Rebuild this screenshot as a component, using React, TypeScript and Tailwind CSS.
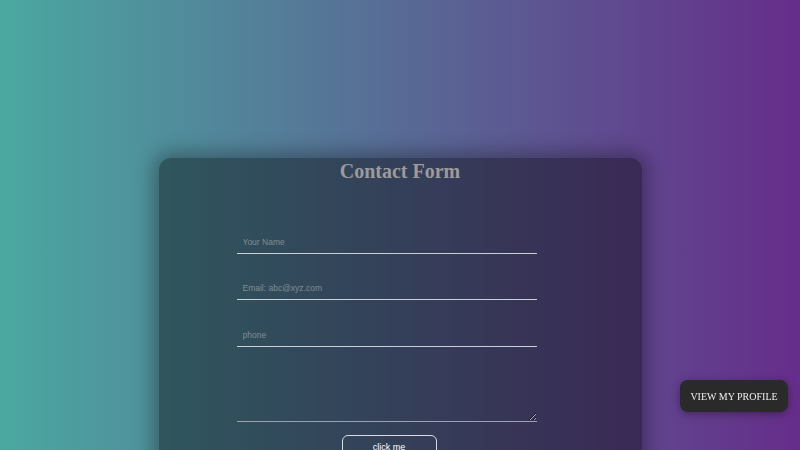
import React from "react";

export default function App() {
  return (
    <div className="min-h-[450px] w-full overflow-hidden bg-[linear-gradient(to_right,#4aa8a0,#662d8a)] pt-[158px]">
      {/* Card */}
      <div className="mx-auto w-[483px] rounded-xl bg-black/40 pb-10 shadow-[0_0_18px_6px_rgba(0,0,0,0.3)]">
        <h1 className="m-0 text-center font-['Liberation_Serif',serif] text-[20px] font-bold leading-[26px] text-[#9b9b9b]">
          Contact Form
        </h1>

        <form className="ml-[78px] mt-[46px] flex w-[300px] flex-col font-['Liberation_Sans',Arial,sans-serif]">
          <input
            placeholder="Your Name"
            className="h-[24px] border-b-[1.5px] border-[#c9d0d6] bg-transparent px-[6px] text-[8.5px] text-gray-200 outline-none placeholder:text-[#7f8d93]"
          />
          <input
            placeholder="Email: abc@xyz.com"
            className="mt-[22px] h-[24px] border-b-[1.5px] border-[#c9d0d6] bg-transparent px-[6px] text-[8.5px] text-gray-200 outline-none placeholder:text-[#7f8d93]"
          />
          <input
            placeholder="phone"
            className="mt-[23px] h-[24px] border-b-[1.5px] border-[#c9d0d6] bg-transparent px-[6px] text-[8.5px] text-gray-200 outline-none placeholder:text-[#7f8d93]"
          />
          <textarea className="mt-[22px] h-[53px] border-b-[1.5px] border-[#9aa3ad] bg-transparent px-[6px] text-[8.5px] text-gray-200 outline-none" />

          <button
            type="button"
            className="ml-[105px] mt-[13px] h-[24px] w-[95px] rounded-md border border-[#d8dce0] bg-transparent text-[9px] leading-[22px] text-white"
          >
            click me
          </button>
        </form>
      </div>

      {/* Floating profile button */}
      <button
        type="button"
        className="fixed bottom-[38px] right-[12px] h-[32px] w-[108px] rounded-lg bg-[#2a2a2a] font-['Liberation_Serif',serif] text-[10px] text-[#eeeeee] shadow-[0_2px_8px_rgba(0,0,0,0.35)]"
      >
        VIEW MY PROFILE
      </button>
    </div>
  );
}
